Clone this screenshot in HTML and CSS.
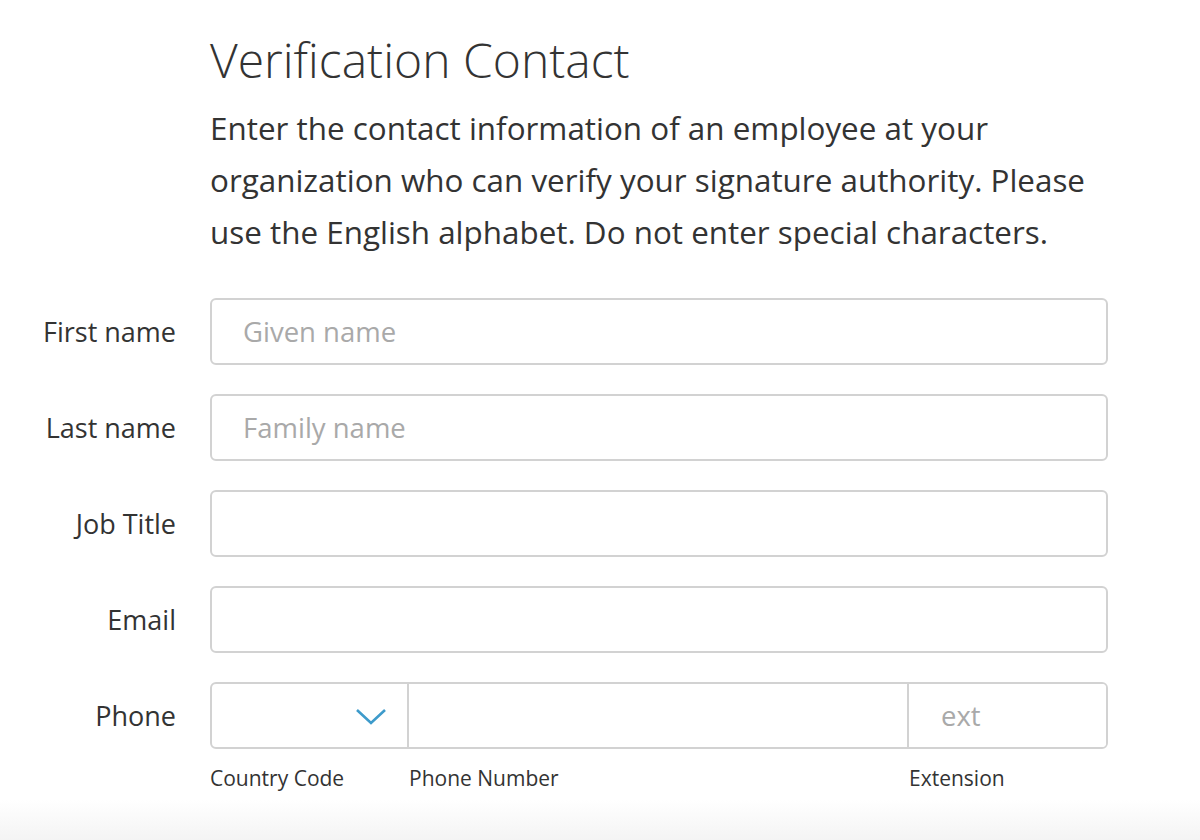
FILE: index.html
```html
<!DOCTYPE html>
<html lang="en">
<head>
<meta charset="utf-8">
<title>Verification Contact</title>
<link rel="stylesheet" href="styles.css">
</head>
<body>
<main class="page">
  <section class="intro">
    <h1 class="title">Verification Contact</h1>
    <p class="lead">Enter the contact information of an employee at your<br>organization who can verify your signature authority. Please<br>use the English alphabet. Do not enter special characters.</p>
  </section>
  <form class="form">
    <label class="label" for="fn">First name</label>
    <input class="field" id="fn" type="text" placeholder="Given name">
    <label class="label" for="ln">Last name</label>
    <input class="field" id="ln" type="text" placeholder="Family name">
    <label class="label" for="jt">Job Title</label>
    <input class="field" id="jt" type="text">
    <label class="label" for="em">Email</label>
    <input class="field" id="em" type="text">
    <label class="label" for="ph">Phone</label>
    <div class="phone">
      <div class="phone-group">
        <div class="cc">
          <svg class="chev" width="32" height="20" viewBox="0 0 32 20"><path d="M2 3 L16 16 L30 3" fill="none" stroke="#3e9bcb" stroke-width="2.6"/></svg>
        </div>
        <input class="num" id="ph" type="text">
        <input class="ext" type="text" placeholder="ext">
      </div>
      <div class="phone-captions">
        <span class="cap cap-cc">Country Code</span>
        <span class="cap cap-num">Phone Number</span>
        <span class="cap cap-ext">Extension</span>
      </div>
    </div>
  </form>
</main>
<div class="shade"></div>
</body>
</html>
```
FILE: styles.css
```css
html, body {
  margin: 0;
  padding: 0;
  background: #fff;
}
body {
  font-family: "Open Sans", "DejaVu Sans", sans-serif;
  color: #333;
  width: 1200px;
  height: 840px;
  overflow: hidden;
  display: flex;
  flex-direction: column;
}
.page {
  flex: 1;
  padding-top: 28px;
}
.intro {
  padding-left: 210px;
}
.title {
  margin: 0;
  font-weight: 300;
  font-size: 48px;
  line-height: 64px;
  letter-spacing: 0;
  color: #333;
}
.lead {
  margin: 10px 0 0;
  width: 960px;
  font-size: 31.4px;
  line-height: 52px;
  letter-spacing: 0;
  color: #333;
}
.form {
  margin-top: 40px;
  display: grid;
  grid-template-columns: 176px 898px;
  column-gap: 34px;
  row-gap: 29px;
  align-items: start;
}
.label {
  text-align: right;
  font-size: 27px;
  line-height: 67px;
  height: 67px;
  color: #333;
}
.field, .num, .ext {
  box-sizing: border-box;
  height: 67px;
  font-family: inherit;
  font-size: 27.5px;
  color: #333;
  outline: none;
  background: #fff;
}
.field {
  width: 898px;
  border: 2px solid #d2d2d2;
  border-radius: 6px;
  padding: 0 31px;
}
::placeholder {
  color: #a9a9a9;
}
.phone-group {
  display: flex;
  height: 67px;
  width: 898px;
  box-sizing: border-box;
  border: 2px solid #d2d2d2;
  border-radius: 6px;
  overflow: hidden;
}
.cc {
  width: 197px;
  flex: none;
  display: flex;
  align-items: center;
  justify-content: flex-end;
  padding-right: 20px;
  box-sizing: border-box;
  border-right: 2px solid #d2d2d2;
}
.chev {
  display: block;
  margin-top: 2px;
}
.num {
  width: 500px;
  flex: none;
  height: 63px;
  border: 0;
  border-right: 2px solid #d2d2d2;
  padding: 0 20px;
}
.ext {
  flex: 1;
  min-width: 0;
  height: 63px;
  border: 0;
  padding: 0 32px;
}
.phone-captions {
  display: flex;
  margin-top: 15px;
  font-size: 21px;
  line-height: 28px;
  color: #333;
}
.cap-cc { width: 199px; }
.cap-num { width: 500px; }
.cap-ext { flex: 1; }
.shade {
  height: 40px;
  flex: none;
  background: linear-gradient(to bottom, #ffffff 0%, #f4f4f4 100%);
}
```
